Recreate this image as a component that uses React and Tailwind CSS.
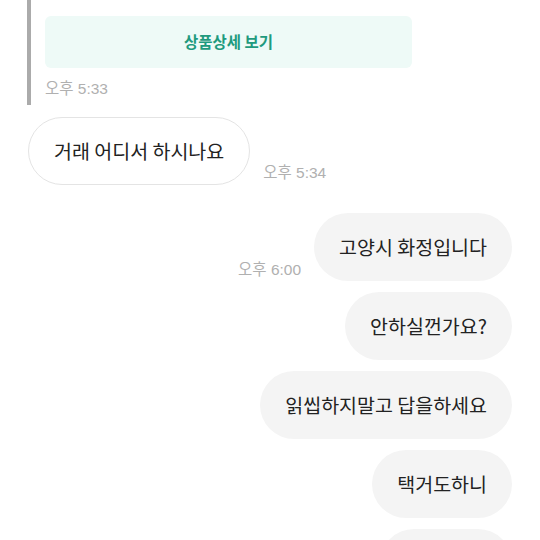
const FONT = { fontFamily: '"Liberation Sans", "Noto Sans CJK KR", sans-serif' };

const Time = ({ children, className = "" }) => (
  <span
    className={`block text-[15.5px] leading-[20px] text-[#b0b0b0] whitespace-nowrap ${className}`}
    style={FONT}
  >
    {children}
  </span>
);

const MyBubble = ({ text, time, className = "" }) => (
  <div className="flex items-end justify-end pr-[28px]">
    {time && <Time className="mr-[13px] mb-[1px]">{time}</Time>}
    <div
      className={`h-[68px] flex items-center px-[25px] rounded-full bg-[#f4f4f4] text-[19.5px] text-[#222] whitespace-nowrap ${className}`}
    >
      {text}
    </div>
  </div>
);

export default function App() {
  return (
    <div
      className="w-[540px] h-[540px] overflow-hidden bg-white"
      style={{ fontFamily: '"Noto Sans CJK KR", "Liberation Sans", sans-serif' }}
    >
      {/* quoted product card */}
      <div className="flex ml-[27px]">
        <div className="w-[4px] bg-[#ababab]" />
        <div className="pl-[14px] pt-[16px] pb-[6px]">
          <div className="w-[367px] h-[52px] rounded-[6px] bg-[#eefaf7] flex items-center justify-center">
            <span className="text-[15.5px] font-bold text-[#1f9a7e]">상품상세 보기</span>
          </div>
          <Time className="mt-[11px]">오후 5:33</Time>
        </div>
      </div>

      {/* incoming */}
      <div className="flex items-end ml-[28px] mt-[12px]">
        <div className="h-[68px] flex items-center px-[25px] rounded-full bg-white border border-[#e4e4e4] text-[19.5px] text-[#222] whitespace-nowrap">
          거래 어디서 하시나요
        </div>
        <Time className="ml-[13px] mb-[2px]">오후 5:34</Time>
      </div>

      {/* outgoing */}
      <div className="flex flex-col gap-[11px] mt-[28px]">
        <MyBubble text="고양시 화정입니다" time="오후 6:00" />
        <MyBubble text="안하실껀가요?" />
        <MyBubble text="읽씹하지말고 답을하세요" />
        <MyBubble text="택거도하니" />
        <MyBubble text="" className="w-[132px]" />
      </div>
    </div>
  );
}
